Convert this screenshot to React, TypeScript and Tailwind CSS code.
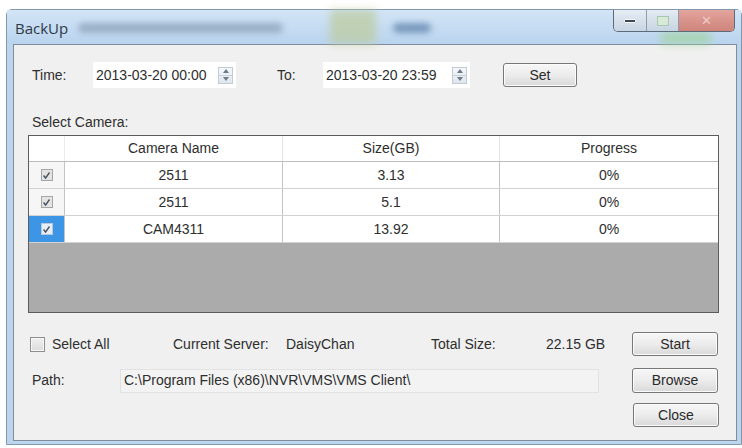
import React from 'react';

// Backup dialog: time range, camera list, totals and path
const cameras = [
  { name: '2511', size: '3.13', progress: '0%', selected: false },
  { name: '2511', size: '5.1', progress: '0%', selected: false },
  { name: 'CAM4311', size: '13.92', progress: '0%', selected: true },
];

const btn =
  'flex items-center justify-center rounded-[3px] border border-[#777] bg-linear-to-b from-[#f7f7f7] via-[#ececec] to-[#d9d9d9] shadow-[inset_0_0_0_1px_#fbfbfb] text-[14px] text-[#2a2a2a]';

function Spinner() {
  return (
    <div className="flex h-[17px] w-[15px] flex-col border border-[#c2ccd6] bg-linear-to-b from-[#f5f8fb] to-[#dfe6ee]">
      <div className="flex flex-1 items-center justify-center border-b border-[#c8d1da]">
        <svg width="6" height="4" viewBox="0 0 6 4">
          <path d="M0 4 L3 0 L6 4 Z" fill="#6d7a88" />
        </svg>
      </div>
      <div className="flex flex-1 items-center justify-center">
        <svg width="6" height="4" viewBox="0 0 6 4">
          <path d="M0 0 L3 4 L6 0 Z" fill="#6d7a88" />
        </svg>
      </div>
    </div>
  );
}

function Check({ on }: { on: boolean }) {
  return (
    <div
      className={
        on
          ? 'flex h-[12px] w-[12px] items-center justify-center border border-[#b8c8da] bg-[#e9eef4]'
          : 'flex h-[12px] w-[12px] items-center justify-center border border-[#a5a5a5] bg-[#e4e4e4]'
      }
    >
      <svg width="9" height="9" viewBox="0 0 9 9">
        <path d="M1.5 4.5 L3.6 7 L7.5 1.5" fill="none" stroke="#4a5563" strokeWidth="1.4" />
      </svg>
    </div>
  );
}

function DateField({ value, width }: { value: string; width: string }) {
  return (
    <div className={`flex h-[26px] items-center justify-between bg-white pl-[3px] pr-[3px] ${width}`}>
      <span>{value}</span>
      <Spinner />
    </div>
  );
}

function TitleBar() {
  return (
    <div className="relative flex h-[34px] items-start justify-between bg-linear-to-b from-[#d3e5f6] via-[#c6dcf2] to-[#b9d4ee]">
      <span className="absolute left-[323px] top-0 h-[34px] w-[46px] bg-[#bccb9c] opacity-70 blur-[4px]" />
      <span className="absolute right-[30px] top-[22px] h-[12px] w-[50px] bg-[#9fd39a] opacity-70 blur-[4px]" />
      <div className="relative flex h-[28px] items-end">
        <span className="pl-[8px] font-['Open_Sans',sans-serif] text-[15px] leading-[20px] text-[#2e3a46]">BackUp</span>
        <span className="mb-[5px] ml-[10px] h-[10px] w-[205px] rounded-full bg-[#8aa0b8] opacity-75 blur-[3px]" />
        <span className="mb-[5px] ml-[110px] h-[10px] w-[38px] rounded-full bg-[#5f82ab] opacity-75 blur-[3px]" />
      </div>
      <div className="relative mr-[6px] flex h-[22px] overflow-hidden rounded-b-[5px] border border-t-0 border-[#5d6a79]">
        <div className="flex w-[33px] items-center justify-center border-r border-[#8d9bab] bg-linear-to-b from-[#e6edf4] to-[#c8d5e3]">
          <span className="h-[4px] w-[12px] rounded-[1px] border border-[#f4f6f8] bg-[#3f4856]" />
        </div>
        <div className="flex w-[32px] items-center justify-center border-r border-[#8d9bab] bg-linear-to-b from-[#e4ebf2] to-[#c7d5e2]">
          <span className="h-[10px] w-[12px] border border-[#a9c7b0] bg-[#d8e9d7]" />
        </div>
        <div className="flex w-[55px] items-center justify-center bg-linear-to-b from-[#e3a49d] to-[#cd847b]">
          <span className="font-['Liberation_Sans',sans-serif] text-[13px] text-[#efc9c4]">✕</span>
        </div>
      </div>
    </div>
  );
}

export default function App() {
  return (
    <div className="h-[448px] w-[742px] overflow-hidden bg-white pt-[9px] pl-[6px]">
      <div className="flex h-[436px] w-[736px] flex-col rounded-t-[6px] border border-[#8298ae] bg-[#bcd4ec]">
        <TitleBar />
        <div className="flex flex-1 pl-[6px] pr-[4px] pb-[3px]">
          <div className="flex flex-1 flex-col border border-[#7e8c9b] bg-[#f0f0f0] font-['Liberation_Sans',Arial,sans-serif] text-[14px] text-[#2e2e2e]">
            {/* time range */}
            <div className="mt-[17px] flex h-[26px] items-center pl-[18px]">
              <span className="w-[61px]">Time:</span>
              <DateField value="2013-03-20 00:00" width="w-[143px]" />
              <span className="ml-[41px] w-[46px]">To:</span>
              <DateField value="2013-03-20 23:59" width="w-[147px]" />
              <button className={`ml-[33px] h-[24px] w-[74px] ${btn}`}>Set</button>
            </div>

            <div className="mt-[24px] flex h-[20px] items-center pl-[18px]">Select Camera:</div>

            {/* camera list */}
            <div className="mt-[3px] ml-[14px] flex h-[178px] w-[691px] flex-col border border-[#5c5c5c] bg-[#ababab]">
              <div className="grid h-[26px] grid-cols-[36px_218px_217px_1fr] border-b border-[#bdbdbd] bg-white">
                <div className="border-r border-[#ececec]" />
                <div className="flex items-center justify-center border-r border-[#e4e4e4]">Camera Name</div>
                <div className="flex items-center justify-center border-r border-[#e4e4e4]">Size(GB)</div>
                <div className="flex items-center justify-center">Progress</div>
              </div>
              {cameras.map((cam, i) => (
                <div
                  key={i}
                  className="grid h-[27px] grid-cols-[36px_218px_217px_1fr] border-b border-[#d2d2d2] bg-white"
                >
                  <div
                    className={
                      cam.selected
                        ? 'flex items-center justify-center border-r border-[#c4c4c4] bg-[#3d95e6]'
                        : 'flex items-center justify-center border-r border-[#c4c4c4] bg-[#f6f6f6]'
                    }
                  >
                    <Check on={cam.selected} />
                  </div>
                  <div className="flex items-center justify-center border-r border-[#c4c4c4]">{cam.name}</div>
                  <div className="flex items-center justify-center border-r border-[#c4c4c4]">{cam.size}</div>
                  <div className="flex items-center justify-center">{cam.progress}</div>
                </div>
              ))}
            </div>

            {/* totals */}
            <div className="mt-[19px] flex h-[24px] items-center pl-[16px]">
              <div className="flex w-[143px] items-center">
                <span className="h-[15px] w-[15px] border border-[#8e8e8e] bg-linear-to-b from-[#f0f0f0] to-[#dcdcdc] shadow-[inset_0_0_0_1px_#f7f7f7]" />
                <span className="ml-[7px]">Select All</span>
              </div>
              <span className="w-[113px]">Current Server:</span>
              <span className="w-[145px]">DaisyChan</span>
              <span className="w-[115px]">Total Size:</span>
              <span className="w-[86px]">22.15 GB</span>
              <button className={`h-[24px] w-[86px] ${btn}`}>Start</button>
            </div>

            {/* destination */}
            <div className="mt-[12px] flex h-[25px] items-center pl-[18px]">
              <span className="w-[88px]">Path:</span>
              <div className="flex h-[24px] w-[479px] items-center border border-[#e2e2e2] bg-[#f3f3f3] pl-[3px]">
                C:\Program Files (x86)\NVR\VMS\VMS Client\
              </div>
              <button className={`ml-[33px] h-[25px] w-[86px] ${btn}`}>Browse</button>
            </div>

            <div className="mt-[10px] flex justify-end pr-[17px]">
              <button className={`h-[24px] w-[86px] ${btn}`}>Close</button>
            </div>
          </div>
        </div>
      </div>
    </div>
  );
}
